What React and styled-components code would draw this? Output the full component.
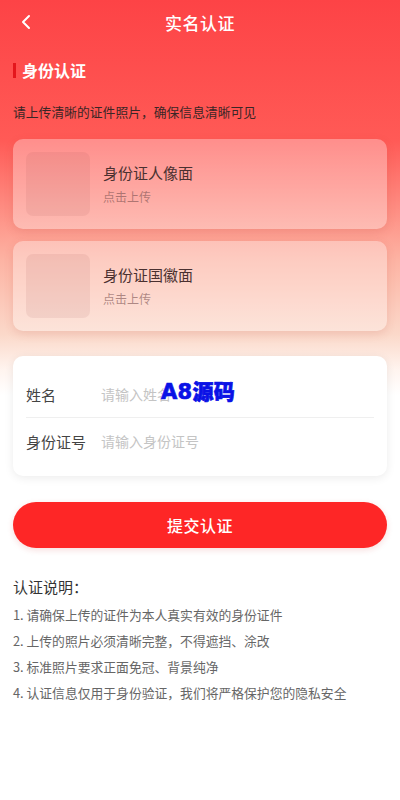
import React from 'react'
import styled, { createGlobalStyle } from 'styled-components'

const Global = createGlobalStyle`
  html, body {
    margin: 0;
    padding: 0;
  }
  body {
    font-family: "Noto Sans CJK SC", "Noto Sans", sans-serif;
    background: #fff;
  }
  * {
    box-sizing: border-box;
  }
`

const Page = styled.div`
  position: relative;
  width: 400px;
  min-height: 800px;
  padding-bottom: 40px;
  background: linear-gradient(
    180deg,
    #fd4346 0px,
    #ff5a56 140px,
    #fdb3a3 260px,
    #fbd9ca 335px,
    #fff4ef 370px,
    #ffffff 395px
  );
`

const Header = styled.div`
  position: relative;
  display: flex;
  align-items: center;
  justify-content: center;
  height: 44px;
`

const Back = styled.div`
  position: absolute;
  left: 16px;
  top: 12px;
  width: 20px;
  height: 20px;
  display: flex;
  align-items: center;
  justify-content: center;
`

const Title = styled.div`
  color: #fff;
  font-size: 17px;
  font-weight: 500;
  letter-spacing: 0.5px;
`

const Section = styled.div`
  display: flex;
  align-items: center;
  margin: 15px 13px 0;
  height: 22px;
  color: #fff;
  font-size: 16px;
  font-weight: 700;
  &::before {
    content: '';
    width: 3px;
    height: 15px;
    margin-right: 6px;
    background: #e4161c;
  }
`

const Hint = styled.div`
  margin: 22px 13px 0;
  line-height: 18px;
  font-size: 12.8px;
  color: #3a2626;
`

const Uploads = styled.div`
  display: flex;
  flex-direction: column;
  gap: 12px;
  margin: 18px 13px 0;
`

const UploadCard = styled.div`
  display: flex;
  align-items: center;
  height: 90px;
  padding: 0 13px;
  border-radius: 10px;
  background: rgba(255, 255, 255, 0.32);
  box-shadow: 0 3px 10px rgba(180, 60, 50, 0.16);
`

const Thumb = styled.div`
  width: 64px;
  height: 64px;
  border-radius: 7px;
  background: rgba(160, 80, 80, 0.1);
  margin-right: 13px;
`

const UploadText = styled.div`
  display: flex;
  flex-direction: column;
  gap: 5px;
`

const UploadTitle = styled.div`
  font-size: 15px;
  line-height: 20px;
  color: #4a3030;
`

const UploadSub = styled.div`
  font-size: 12px;
  line-height: 17px;
  color: rgba(120, 80, 80, 0.6);
`

const Form = styled.div`
  position: relative;
  margin: 25px 13px 0;
  padding: 15px 13px 12px;
  background: #fff;
  border-radius: 10px;
  box-shadow: 0 2px 10px rgba(0, 0, 0, 0.08);
`

const Row = styled.div`
  display: flex;
  align-items: center;
  height: ${p => (p.last ? '46px' : '47px')};
  border-bottom: ${p => (p.last ? 'none' : '1px solid #efefef')};
`

const Label = styled.div`
  width: 75px;
  font-size: 15px;
  color: #444;
`

const Input = styled.input`
  flex: 1;
  border: none;
  outline: none;
  padding: 0;
  font-family: inherit;
  font-size: 14px;
  color: #333;
  background: transparent;
  &::placeholder {
    color: #c4c4c4;
  }
`

const Watermark = styled.div`
  position: absolute;
  left: 148px;
  top: 22px;
  font-family: "DejaVu Sans", "Noto Sans CJK SC", sans-serif;
  font-size: 21px;
  line-height: 28px;
  font-weight: 900;
  color: #0a12e6;
  letter-spacing: 0.3px;
  -webkit-text-stroke: 0.7px #0a12e6;
  text-shadow: 0 0 2px #fff;
`

const Submit = styled.button`
  display: block;
  width: 374px;
  height: 46px;
  margin: 26px 13px 0;
  border: none;
  border-radius: 23px;
  background: #fe2626;
  color: #fff;
  font-family: inherit;
  font-size: 16px;
  font-weight: 500;
  letter-spacing: 0.5px;
  box-shadow: 0 2px 6px rgba(200, 30, 30, 0.15);
`

const Notes = styled.div`
  margin: 28px 13px 0;
`

const NotesTitle = styled.div`
  font-size: 15px;
  line-height: 22px;
  color: #333;
  margin-bottom: 4px;
`

const NoteItem = styled.div`
  font-size: 12.8px;
  line-height: 26px;
  color: #666;
`

const uploads = [
  { title: '身份证人像面', sub: '点击上传' },
  { title: '身份证国徽面', sub: '点击上传' },
]

const notes = [
  '1. 请确保上传的证件为本人真实有效的身份证件',
  '2. 上传的照片必须清晰完整，不得遮挡、涂改',
  '3. 标准照片要求正面免冠、背景纯净',
  '4. 认证信息仅用于身份验证，我们将严格保护您的隐私安全',
]

export default function App() {
  return (
    <Page>
      <Global />
      <Header>
        <Back>
          <svg width="12" height="16" viewBox="0 0 12 16" fill="none">
            <path d="M9 2 L3 8 L9 14" stroke="#fff" strokeWidth="2" strokeLinecap="round" strokeLinejoin="round" />
          </svg>
        </Back>
        <Title>实名认证</Title>
      </Header>

      <Section>身份认证</Section>
      <Hint>请上传清晰的证件照片，确保信息清晰可见</Hint>

      <Uploads>
        {uploads.map(u => (
          <UploadCard key={u.title}>
            <Thumb />
            <UploadText>
              <UploadTitle>{u.title}</UploadTitle>
              <UploadSub>{u.sub}</UploadSub>
            </UploadText>
          </UploadCard>
        ))}
      </Uploads>

      <Form>
        <Row>
          <Label>姓名</Label>
          <Input placeholder="请输入姓名" />
        </Row>
        <Row last>
          <Label>身份证号</Label>
          <Input placeholder="请输入身份证号" />
        </Row>
        <Watermark>A8源码</Watermark>
      </Form>

      <Submit>提交认证</Submit>

      <Notes>
        <NotesTitle>认证说明：</NotesTitle>
        {notes.map(n => (
          <NoteItem key={n}>{n}</NoteItem>
        ))}
      </Notes>
    </Page>
  )
}
